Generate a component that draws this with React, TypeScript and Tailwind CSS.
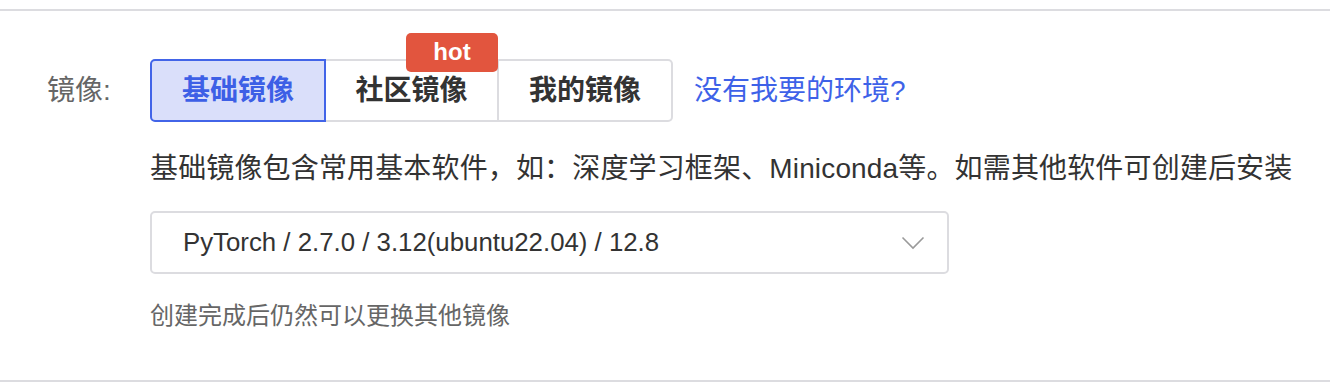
import React from "react";

const font = { fontFamily: '"Liberation Sans", "Noto Sans CJK SC", sans-serif' };

export default function App() {
  return (
    <div className="w-[1330px] h-[382px] bg-white flex flex-col" style={font}>
      <div className="h-[9px]" />
      <div className="h-[2px] bg-[#dcdce0]" />
      <div className="flex flex-row pt-[48px] pl-[47px]">
        <div className="w-[103px] h-[63px] flex items-center text-[28px] text-[#666666]">镜像:</div>
        <div className="flex flex-col">
          <div className="flex items-center h-[63px]">
            <div className="flex h-[63px]">
              <div className="w-[176px] h-full flex items-center justify-center border-2 border-[#4264e8] bg-[#dadffa] rounded-l-[5px] text-[28px] font-semibold text-[#3d5fe6]">
                基础镜像
              </div>
              <div className="relative w-[173px] h-full flex items-center justify-center border-y-2 border-r-2 border-[#dcdce0] text-[28px] font-semibold text-[#333333]">
                社区镜像
                <div className="absolute top-[-28px] right-[-1px] w-[92px] h-[39px] rounded-[5px] bg-[#e2553e] text-white text-[24px] font-semibold flex items-center justify-center pb-[2px]">
                  hot
                </div>
              </div>
              <div className="w-[174px] h-full flex items-center justify-center border-y-2 border-r-2 border-[#dcdce0] rounded-r-[5px] text-[28px] font-semibold text-[#333333]">
                我的镜像
              </div>
            </div>
            <div className="ml-[21px] text-[28px] text-[#3e62e8]">没有我要的环境?</div>
          </div>
          <div className="mt-[27px] h-[40px] leading-[40px] text-[28px] tracking-[0.15px] text-[#333333] whitespace-nowrap">
            基础镜像包含常用基本软件，如：深度学习框架、Miniconda等。如需其他软件可创建后安装
          </div>
          <div className="mt-[22px] w-[799px] h-[63px] border-2 border-[#dcdce0] rounded-[5px] flex items-center justify-between pl-[31px] pr-[22px]">
            <span className="text-[25.8px] text-[#333333]">PyTorch / 2.7.0 / 3.12(ubuntu22.04) / 12.8</span>
            <svg width="24" height="14" viewBox="0 0 24 14" fill="none">
              <path d="M1.5 1.5 L12 12 L22.5 1.5" stroke="#9a9a9a" strokeWidth="1.6" />
            </svg>
          </div>
          <div className="mt-[25px] h-[34px] leading-[34px] text-[24px] text-[#666666]">
            创建完成后仍然可以更换其他镜像
          </div>
        </div>
      </div>
      <div className="flex-1" />
      <div className="h-[2px] bg-[#dcdce0]" />
    </div>
  );
}
